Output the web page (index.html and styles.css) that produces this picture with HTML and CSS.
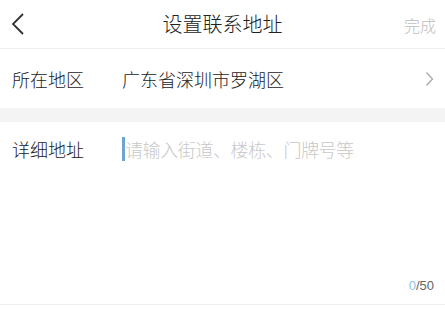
FILE: index.html
```html
<!DOCTYPE html>
<html lang="zh-CN">
<head>
<meta charset="utf-8">
<link rel="stylesheet" href="styles.css">
</head>
<body>
<div class="page">
  <header class="nav">
    <span class="nav-back">
      <svg width="14" height="22" viewBox="0 0 14 22"><polyline points="12,1 2,11 12,21" fill="none" stroke="#333" stroke-width="1.8"/></svg>
    </span>
    <span class="nav-title">设置联系地址</span>
    <span class="nav-done">完成</span>
  </header>
  <div class="row region">
    <span class="label">所在地区</span>
    <span class="value">广东省深圳市罗湖区</span>
    <span class="arrow">
      <svg width="9" height="16" viewBox="0 0 9 16"><polyline points="1.5,1.5 7.5,8 1.5,14.5" fill="none" stroke="#aaa" stroke-width="1.4"/></svg>
    </span>
  </div>
  <div class="gap"></div>
  <div class="detail">
    <div class="detail-line">
      <span class="label">详细地址</span>
      <span class="input"><span class="caret"></span><span class="placeholder">请输入街道、楼栋、门牌号等</span></span>
    </div>
    <div class="counter"><span class="count-now">0</span>/50</div>
  </div>
</div>
</body>
</html>
```
FILE: styles.css
```css
html, body {
  margin: 0;
  padding: 0;
  background: #fff;
}
body {
  font-family: "Noto Sans CJK SC", "Noto Sans", sans-serif;
  font-weight: 300;
  color: #222;
}
.page {
  width: 445px;
  height: 310px;
  overflow: hidden;
}
.nav {
  height: 48px;
  border-bottom: 1px solid #eeeeee;
  display: flex;
  align-items: center;
  justify-content: space-between;
  padding: 0 9px 0 11px;
  position: relative;
}
.nav-back {
  display: flex;
  width: 14px;
  height: 22px;
  margin-top: -1px;
}
.nav-title {
  position: absolute;
  left: 0;
  right: 0;
  text-align: center;
  font-size: 20px;
  line-height: 28px;
  color: #222;
  pointer-events: none;
  margin-top: -1px;
}
.nav-done {
  font-size: 16px;
  line-height: 22px;
  color: #bdbdbd;
  margin-top: 1px;
}
.row {
  height: 59px;
  display: flex;
  align-items: center;
  padding: 0 11px 0 12px;
}
.label {
  font-size: 18px;
  line-height: 24px;
  color: #222;
  width: 110px;
  flex: none;
}
.value {
  font-size: 18px;
  line-height: 24px;
  color: #222;
  flex: 1;
}
.arrow {
  display: flex;
  width: 9px;
  height: 16px;
}
.gap {
  height: 14px;
  background: #f4f4f4;
}
.detail {
  height: 183px;
  border-bottom: 1px solid #eeeeee;
  display: flex;
  flex-direction: column;
  justify-content: space-between;
  padding: 15px 11px 0 12px;
  box-sizing: border-box;
}
.detail-line {
  display: flex;
  align-items: center;
}
.input {
  display: flex;
  align-items: center;
  font-size: 18px;
  line-height: 24px;
}
.caret {
  width: 3px;
  height: 24px;
  background: #6fa3d6;
}
.placeholder {
  color: #c8c8c8;
  letter-spacing: -0.4px;
}
.counter {
  align-self: flex-end;
  font-family: "Liberation Sans", Arial, sans-serif;
  font-weight: 400;
  font-size: 13px;
  line-height: 14px;
  color: #666;
  margin-bottom: 11px;
}
.count-now {
  color: #8fc3e3;
}
```
